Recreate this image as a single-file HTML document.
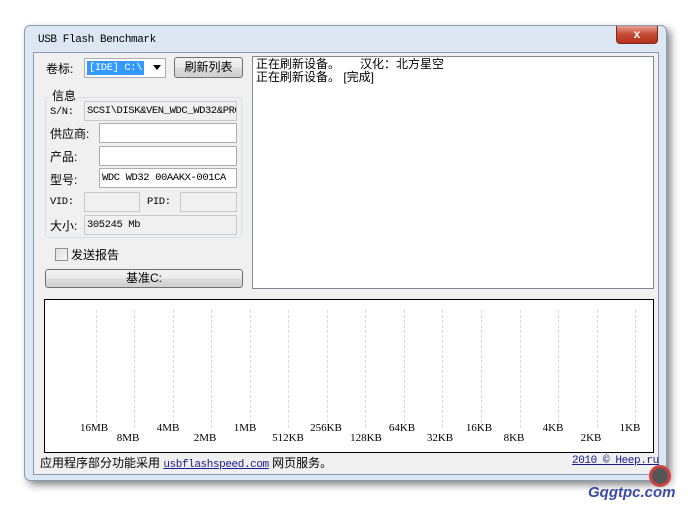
<!DOCTYPE html>
<html><head><meta charset="utf-8"><style>
body{margin:0;width:699px;height:508px;background:#fff;position:relative;overflow:hidden;font-family:"Liberation Sans","Noto Sans CJK SC",sans-serif;font-size:12px;color:#000}
.a{position:absolute;white-space:nowrap}
.mono{font-family:"Liberation Mono","Noto Sans CJK SC",monospace;font-size:10.5px;letter-spacing:-0.4px}
.box{position:absolute;background:#fff;border:1px solid #abadb3;box-sizing:border-box}
.dis{position:absolute;background:#f0f0f0;border:1px solid #c8c8c8;box-sizing:border-box}
.btn{position:absolute;border:1px solid #707070;border-radius:3px;background:linear-gradient(#f2f2f2,#ebebeb 50%,#dddddd 51%,#cfcfcf);box-sizing:border-box;text-align:center}
.g{position:absolute;top:310px;height:118px;border-left:1px dashed #d8d8d8}
.lb{position:absolute;font-family:"Liberation Serif",serif;font-size:11px;transform:translateX(-50%)}
</style></head><body>
<div class="a" style="left:24px;top:25px;width:643px;height:456px;background:#dce7f3;border:1px solid #8a9bb0;border-radius:6px;box-shadow:4px 4px 8px #888;box-sizing:border-box"></div>
<div class="a mono" style="left:38px;top:34px;font-size:11px">USB Flash Benchmark</div>
<div class="a" style="left:616px;top:26px;width:40px;height:17px;background:linear-gradient(#e8a090,#c44a32 50%,#b8301c);border:1px solid #7a2a20;border-top:none;border-radius:0 0 4px 4px;color:#fff;text-align:center;font-weight:bold;font-size:12px;line-height:16px">x</div>
<div class="a" style="left:33px;top:52px;width:626px;height:423px;background:#f0f0f0;border:1px solid #8a9bb0;box-sizing:border-box"></div>

<div class="a" style="left:46px;top:60px">卷标:</div>
<div class="box" style="left:84px;top:58px;width:82px;height:20px"></div>
<div class="a mono" style="left:87px;top:61px;background:#3399ff;color:#fff;padding:0 2px;height:14px;line-height:14px">[IDE] C:\</div>
<div class="a" style="left:153px;top:65px;width:0;height:0;border:4px solid transparent;border-top:5px solid #000"></div>
<div class="btn" style="left:174px;top:57px;width:69px;height:21px;line-height:19px">刷新列表</div>

<div class="a" style="left:45px;top:97px;width:197px;height:141px;border:1px solid #d5dfe5;border-radius:3px;box-sizing:border-box"></div>
<div class="a" style="left:50px;top:87px;background:#f0f0f0;padding:0 2px">信息</div>
<div class="a mono" style="left:50px;top:106px">S/N:</div>
<div class="dis mono" style="left:84px;top:101px;width:153px;height:20px;line-height:18px;padding-left:2px;overflow:hidden">SCSI\DISK&amp;VEN_WDC_WD32&amp;PROD</div>
<div class="a" style="left:50px;top:125px">供应商:</div>
<div class="box" style="left:99px;top:123px;width:138px;height:20px"></div>
<div class="a" style="left:50px;top:148px">产品:</div>
<div class="box" style="left:99px;top:146px;width:138px;height:20px"></div>
<div class="a" style="left:50px;top:171px">型号:</div>
<div class="box mono" style="left:99px;top:168px;width:138px;height:20px;line-height:18px;padding-left:2px;overflow:hidden">WDC WD32 00AAKX-001CA</div>
<div class="a mono" style="left:50px;top:196px">VID:</div>
<div class="dis" style="left:84px;top:192px;width:56px;height:20px"></div>
<div class="a mono" style="left:147px;top:196px">PID:</div>
<div class="dis" style="left:180px;top:192px;width:57px;height:20px"></div>
<div class="a" style="left:50px;top:217px">大小:</div>
<div class="dis mono" style="left:84px;top:215px;width:153px;height:20px;line-height:18px;padding-left:2px">305245 Mb</div>

<div class="a" style="left:55px;top:248px;width:11px;height:11px;border:1px solid #8e8f8f;background:linear-gradient(135deg,#ddd,#f8f8f8)"></div>
<div class="a" style="left:71px;top:246px">发送报告</div>
<div class="btn" style="left:45px;top:269px;width:198px;height:19px;line-height:17px">基准C:</div>

<div class="box" style="left:252px;top:56px;width:402px;height:233px;border-color:#828790"></div>
<div class="a" style="left:256px;top:58px;line-height:13px">正在刷新设备。&nbsp;&nbsp;&nbsp;&nbsp;&nbsp;&nbsp;汉化：北方星空<br>正在刷新设备。 [完成]</div>

<div class="a" style="left:44px;top:299px;width:610px;height:154px;background:#fff;border:1px solid #000;box-sizing:border-box"></div>
<div class="g" style="left:96px"></div><div class="g" style="left:134px"></div><div class="g" style="left:173px"></div><div class="g" style="left:211px"></div><div class="g" style="left:250px"></div><div class="g" style="left:288px"></div><div class="g" style="left:327px"></div><div class="g" style="left:365px"></div><div class="g" style="left:404px"></div><div class="g" style="left:442px"></div><div class="g" style="left:481px"></div><div class="g" style="left:520px"></div><div class="g" style="left:558px"></div><div class="g" style="left:597px"></div><div class="g" style="left:635px"></div>
<div class="lb" style="left:94px;top:422px">16MB</div><div class="lb" style="left:128px;top:432px">8MB</div>
<div class="lb" style="left:168px;top:422px">4MB</div><div class="lb" style="left:205px;top:432px">2MB</div>
<div class="lb" style="left:245px;top:422px">1MB</div><div class="lb" style="left:288px;top:432px">512KB</div>
<div class="lb" style="left:326px;top:422px">256KB</div><div class="lb" style="left:366px;top:432px">128KB</div>
<div class="lb" style="left:402px;top:422px">64KB</div><div class="lb" style="left:440px;top:432px">32KB</div>
<div class="lb" style="left:479px;top:422px">16KB</div><div class="lb" style="left:514px;top:432px">8KB</div>
<div class="lb" style="left:553px;top:422px">4KB</div><div class="lb" style="left:591px;top:432px">2KB</div>
<div class="lb" style="left:630px;top:422px">1KB</div>

<div class="a" style="left:40px;top:454px">应用程序部分功能采用 <span class="mono" style="color:#1a1a8c;text-decoration:underline;font-size:11px">usbflashspeed.com</span> 网页服务。</div>
<div class="a mono" style="left:572px;top:455px;color:#1a1a8c;text-decoration:underline;font-size:11px">2010 © Heep.ru</div>
<div class="a" style="left:649px;top:465px;width:16px;height:16px;border:3px solid #d04040;border-radius:50%;background:#555"></div>
<div class="a" style="left:588px;top:484px;color:#3a4aa8;font-weight:bold;font-style:italic;font-size:15px">Gqgtpc.com</div>
</body></html>
